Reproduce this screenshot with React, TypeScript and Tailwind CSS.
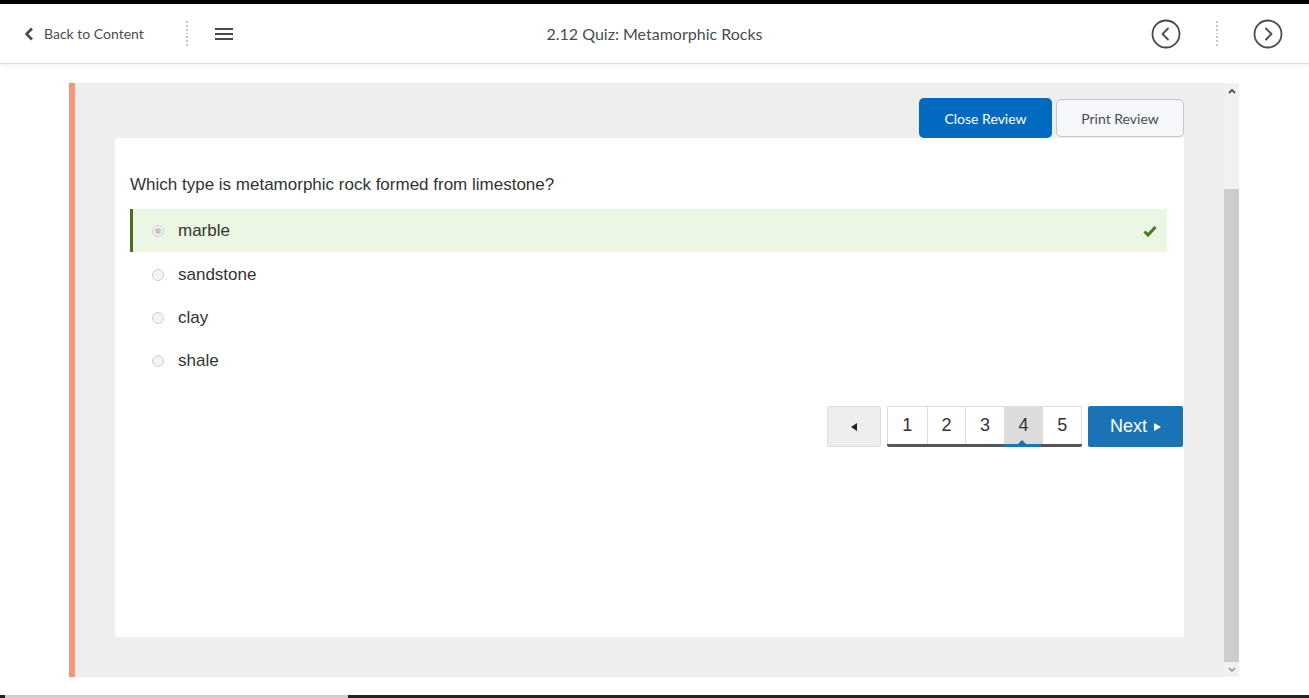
import React from 'react';

const answers = [
    { label: 'marble', correct: true },
    { label: 'sandstone', correct: false },
    { label: 'clay', correct: false },
    { label: 'shale', correct: false },
];

function DottedSep() {
    return (
        <div className="flex flex-col gap-[2px] h-[24px] justify-center">
            {Array.from({ length: 7 }).map((_, i) => (
                <span key={i} className="block w-[2px] h-[2px] bg-[#b5b5b5] rounded-full" />
            ))}
        </div>
    );
}

function CircleArrow({ dir }: { dir: 'left' | 'right' }) {
    return (
        <svg width="30" height="30" viewBox="0 0 30 30">
            <circle cx="15" cy="15" r="13.5" fill="none" stroke="#494c4e" strokeWidth="1.8" />
            {dir === 'left' ? (
                <path d="M17 9.5 L11.5 15 L17 20.5" fill="none" stroke="#494c4e" strokeWidth="1.8" strokeLinecap="round" strokeLinejoin="round" />
            ) : (
                <path d="M13 9.5 L18.5 15 L13 20.5" fill="none" stroke="#494c4e" strokeWidth="1.8" strokeLinecap="round" strokeLinejoin="round" />
            )}
        </svg>
    );
}

function Header() {
    return (
        <div className="relative z-10 h-[60px] bg-white border-b border-[#dcdcdc] shadow-[0_2px_4px_rgba(0,0,0,0.05)] grid grid-cols-[1fr_auto_1fr] items-center font-['Lato',sans-serif] text-[#494c4e]">
            <div className="flex items-center pl-[24px]">
                <svg width="10" height="14" viewBox="0 0 10 14" className="mr-[10px]">
                    <path d="M8 1.5 L2.5 7 L8 12.5" fill="none" stroke="#494c4e" strokeWidth="2.6" strokeLinejoin="round" />
                </svg>
                <span className="text-[14px]">Back to Content</span>
                <div className="ml-[42px]">
                    <DottedSep />
                </div>
                <svg width="18" height="14" viewBox="0 0 18 14" className="ml-[27px]">
                    <rect x="0" y="1" width="18" height="2" fill="#494c4e" />
                    <rect x="0" y="6" width="18" height="2" fill="#494c4e" />
                    <rect x="0" y="11" width="18" height="2" fill="#494c4e" />
                </svg>
            </div>
            <div className="text-center text-[16px]">2.12 Quiz: Metamorphic Rocks</div>
            <div className="flex items-center justify-end gap-[35px] pr-[26px]">
                <CircleArrow dir="left" />
                <DottedSep />
                <CircleArrow dir="right" />
            </div>
        </div>
    );
}

function Radio({ checked }: { checked: boolean }) {
    return (
        <span className="w-[12px] h-[12px] rounded-full border border-[#d0d0d0] bg-[#f4f4f4] flex items-center justify-center">
            {checked && <span className="w-[6px] h-[6px] rounded-full bg-[#c4c4c4]" />}
        </span>
    );
}

function Pagination() {
    return (
        <div className="flex justify-end items-start gap-[6px] pr-[1px] font-['Liberation_Sans',Arial,sans-serif]">
            <button className="w-[54px] h-[41px] bg-[#eeeeee] border border-[#dddddd] rounded-[2px] flex items-center justify-center">
                <svg width="7" height="8" viewBox="0 0 7 8">
                    <path d="M6 0 L0 4 L6 8 Z" fill="#222" />
                </svg>
            </button>
            <div className="flex flex-col">
                <div className="flex h-[38px] border border-b-0 border-[#dddddd] bg-white">
                    {[1, 2, 3, 4, 5].map((n) => (
                        <div
                            key={n}
                            className={`w-[38.6px] flex items-center justify-center text-[18px] text-[#333] ${n > 1 ? 'border-l border-[#dddddd]' : ''} ${n === 4 ? 'bg-[#dcdcdc]' : ''}`}
                        >
                            {n}
                        </div>
                    ))}
                </div>
                <div className="relative h-[3px] bg-[#555] rounded-b-[2px] flex">
                    <div className="w-[116px]" />
                    <div className="relative w-[38px] bg-[#1a73b5]">
                        <span className="absolute left-1/2 -translate-x-1/2 -top-[4px] w-0 h-0 border-l-[4px] border-r-[4px] border-b-[4px] border-l-transparent border-r-transparent border-b-[#1a73b5]" />
                    </div>
                </div>
            </div>
            <button className="w-[95px] h-[41px] bg-[#1b72b4] rounded-[2px] flex items-center justify-center gap-[7px] text-white text-[18px]">
                <span>Next</span>
                <svg width="7" height="8" viewBox="0 0 7 8">
                    <path d="M0 0 L7 4 L0 8 Z" fill="#fff" />
                </svg>
            </button>
        </div>
    );
}

function QuizCard() {
    return (
        <div className="bg-white h-[499px] pl-[15px] pt-[37px] font-['Liberation_Sans',Arial,sans-serif] text-[#333]">
            <div className="text-[17px] leading-[20px]">Which type is metamorphic rock formed from limestone?</div>
            <div className="mt-[14px] pr-[17px] flex flex-col">
                {answers.map((a, i) => (
                    <div
                        key={a.label}
                        className={`flex items-center h-[43px] border-l-[3px] pl-[19px] pr-[10px] ${a.correct ? 'bg-[#ebf6e5] border-[#4d6c1c] h-[42px]' : 'border-transparent'} ${i === 1 ? 'mt-[1px]' : ''}`}
                    >
                        <Radio checked={a.correct} />
                        <span className="ml-[14px] text-[17px] flex-1">{a.label}</span>
                        {a.correct && (
                            <svg width="14" height="12" viewBox="0 0 14 12">
                                <path d="M1.5 6.5 L5 10 L12.5 2" fill="none" stroke="#4a7a1a" strokeWidth="3" strokeLinejoin="miter" />
                            </svg>
                        )}
                    </div>
                ))}
            </div>
            <div className="mt-[24px]">
                <Pagination />
            </div>
        </div>
    );
}

function Scrollbar() {
    return (
        <div className="w-[15px] bg-[#f1f1f1] flex flex-col">
            <div className="h-[15px] flex items-center justify-center">
                <svg width="8" height="6" viewBox="0 0 8 6">
                    <path d="M1 5 L4 2 L7 5" fill="none" stroke="#505050" strokeWidth="1.8" />
                </svg>
            </div>
            <div className="h-[91px]" />
            <div className="flex-1 bg-[#cdcdcd]" />
            <div className="h-[15px] flex items-center justify-center">
                <svg width="8" height="6" viewBox="0 0 8 6">
                    <path d="M1 1 L4 4 L7 1" fill="none" stroke="#a3a3a3" strokeWidth="1.8" />
                </svg>
            </div>
        </div>
    );
}

export default function App() {
    return (
        <div className="w-[1309px] h-[698px] overflow-hidden flex flex-col bg-white">
            <div className="h-[4px] bg-black" />
            <Header />
            <div className="flex-1 pl-[69px] pr-[70px] pt-[19px] pb-[17px]">
                <div className="h-[594px] flex">
                    <div className="w-[6px] bg-[#f5957a]" />
                    <div className="flex-1 bg-[#eeeeee] pl-[40px] pr-[40px] pt-[15px]">
                        <div className="flex justify-end items-center gap-[4px] h-[40px] font-['Lato',sans-serif] text-[14px]">
                            <button className="w-[133px] h-[40px] bg-[#006ac0] text-white rounded-[5px]">Close Review</button>
                            <button className="w-[128px] h-[38px] bg-[#f5f7fa] border border-[#c5c8cb] text-[#494c4e] rounded-[5px]">Print Review</button>
                        </div>
                        <QuizCard />
                    </div>
                    <Scrollbar />
                </div>
            </div>
            <div className="h-[3px] flex">
                <div className="w-[5px] bg-[#222]" />
                <div className="w-[343px] bg-[#d0d0d0]" />
                <div className="flex-1 bg-[#222]" />
            </div>
        </div>
    );
}
